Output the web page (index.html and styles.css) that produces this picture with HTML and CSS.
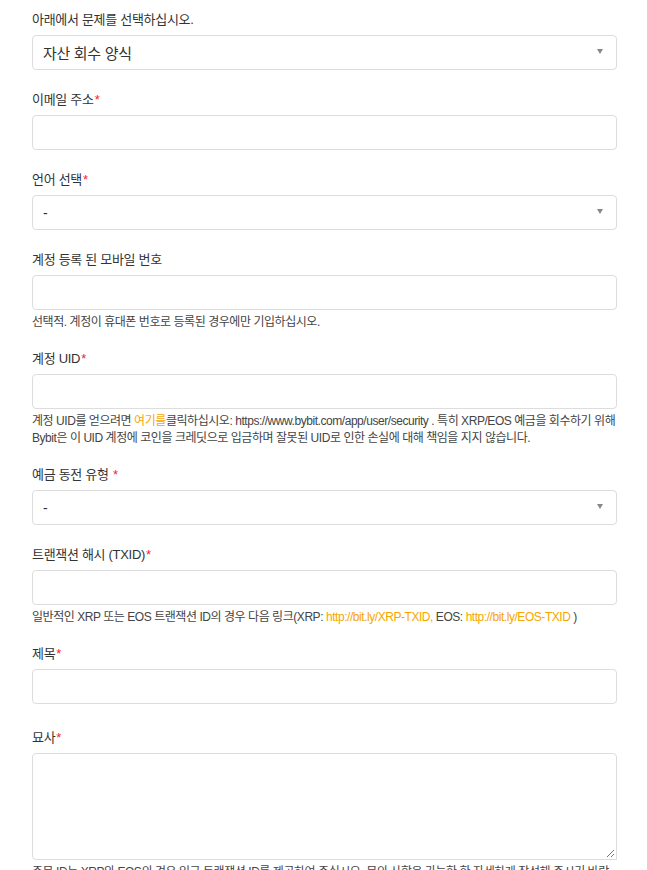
FILE: index.html
```html
<!DOCTYPE html>
<html lang="ko">
<head>
<meta charset="utf-8">
<link rel="stylesheet" href="styles.css">
</head>
<body>
<form class="form">
  <div class="group">
    <label class="label">아래에서 문제를 선택하십시오.</label>
    <div class="select">
      <span class="select-value big">자산 회수 양식</span>
      <span class="arrow"></span>
    </div>
  </div>

  <div class="group">
    <label class="label">이메일 주소<span class="req">*</span></label>
    <div class="input"></div>
  </div>

  <div class="group">
    <label class="label">언어 선택<span class="req">*</span></label>
    <div class="select">
      <span class="select-value">-</span>
      <span class="arrow"></span>
    </div>
  </div>

  <div class="group group-help">
    <label class="label">계정 등록 된 모바일 번호</label>
    <div class="input"></div>
    <p class="help">선택적. 계정이 휴대폰 번호로 등록된 경우에만 기입하십시오.</p>
  </div>

  <div class="group group-help">
    <label class="label">계정 UID<span class="req">*</span></label>
    <div class="input"></div>
    <p class="help">계정 UID를 얻으려면 <a class="link">여기를</a>클릭하십시오: https://www.bybit.com/app/user/security . 특히 XRP/EOS 예금을 회수하기 위해<br>Bybit은 이 UID 계정에 코인을 크레딧으로 입금하며 잘못된 UID로 인한 손실에 대해 책임을 지지 않습니다.</p>
  </div>

  <div class="group">
    <label class="label">예금 동전 유형 <span class="req">*</span></label>
    <div class="select">
      <span class="select-value">-</span>
      <span class="arrow"></span>
    </div>
  </div>

  <div class="group group-help">
    <label class="label">트랜잭션 해시 (TXID)<span class="req">*</span></label>
    <div class="input"></div>
    <p class="help">일반적인 XRP 또는 EOS 트랜잭션 ID의 경우 다음 링크(XRP: <a class="link">http://bit.ly/XRP-TXID,</a> EOS: <a class="link">http://bit.ly/EOS-TXID</a> )</p>
  </div>

  <div class="group group-wide">
    <label class="label">제목<span class="req">*</span></label>
    <div class="input"></div>
  </div>

  <div class="group">
    <label class="label">묘사<span class="req">*</span></label>
    <div class="textarea">
      <svg class="grip" width="9" height="9" viewBox="0 0 9 9"><path d="M8 1 L1 8 M8 5 L5 8" stroke="#777" stroke-width="1" fill="none"/></svg>
    </div>
    <p class="help help-wrap">주문 ID는 XRP와 EOS의 경우 입금 트랜잭션 ID를 제공하여 주십시오. 문의 사항은 가능한 한 자세하게 작성해 주시기 바랍니다. 관련 문제의 스크린샷을 첨부해 주십시오.</p>
  </div>
</form>
</body>
</html>
```

FILE: styles.css
```css
* { box-sizing: border-box; }

html, body {
  margin: 0;
  padding: 0;
  background: #fff;
}

body {
  font-family: "Liberation Sans", Arial, "Noto Sans CJK KR", sans-serif;
  color: #333;
  width: 647px;
  height: 870px;
  overflow: hidden;
}

.form {
  padding: 10px 30px 0 32px;
  width: 617px;
}

.group {
  margin-bottom: 20px;
}

.group-help {
  margin-bottom: 18px;
}

.group-wide {
  margin-bottom: 24px;
}

.label {
  display: block;
  font-size: 13px;
  line-height: 20px;
  height: 20px;
  margin-bottom: 5px;
  color: #333;
  letter-spacing: -0.3px;
}

.req {
  color: #f5222d;
  margin-left: 1px;
}

.input,
.select {
  width: 585px;
  height: 35px;
  border: 1px solid #ddd;
  border-radius: 4px;
  background: #fff;
}

.select {
  display: flex;
  align-items: center;
  justify-content: space-between;
  padding: 0 13px 0 10px;
}

.select-value {
  font-size: 14px;
  color: #333;
}

.select-value.big {
  font-size: 15px;
  letter-spacing: -0.3px;
}

.arrow {
  width: 0;
  height: 0;
  border-left: 3px solid transparent;
  border-right: 3px solid transparent;
  border-top: 5px solid #888;
  margin-top: -2px;
}

.textarea {
  position: relative;
  width: 585px;
  height: 107px;
  border: 1px solid #ddd;
  border-radius: 4px 4px 0 4px;
}

.grip {
  position: absolute;
  right: 1px;
  bottom: 1px;
}

.help {
  margin: 4px 0 0;
  font-size: 12px;
  line-height: 17px;
  color: #444;
  letter-spacing: -0.45px;
  white-space: nowrap;
}

.help-wrap {
  white-space: normal;
  width: 585px;
}

.link {
  color: #f7a600;
  text-decoration: none;
}
```
